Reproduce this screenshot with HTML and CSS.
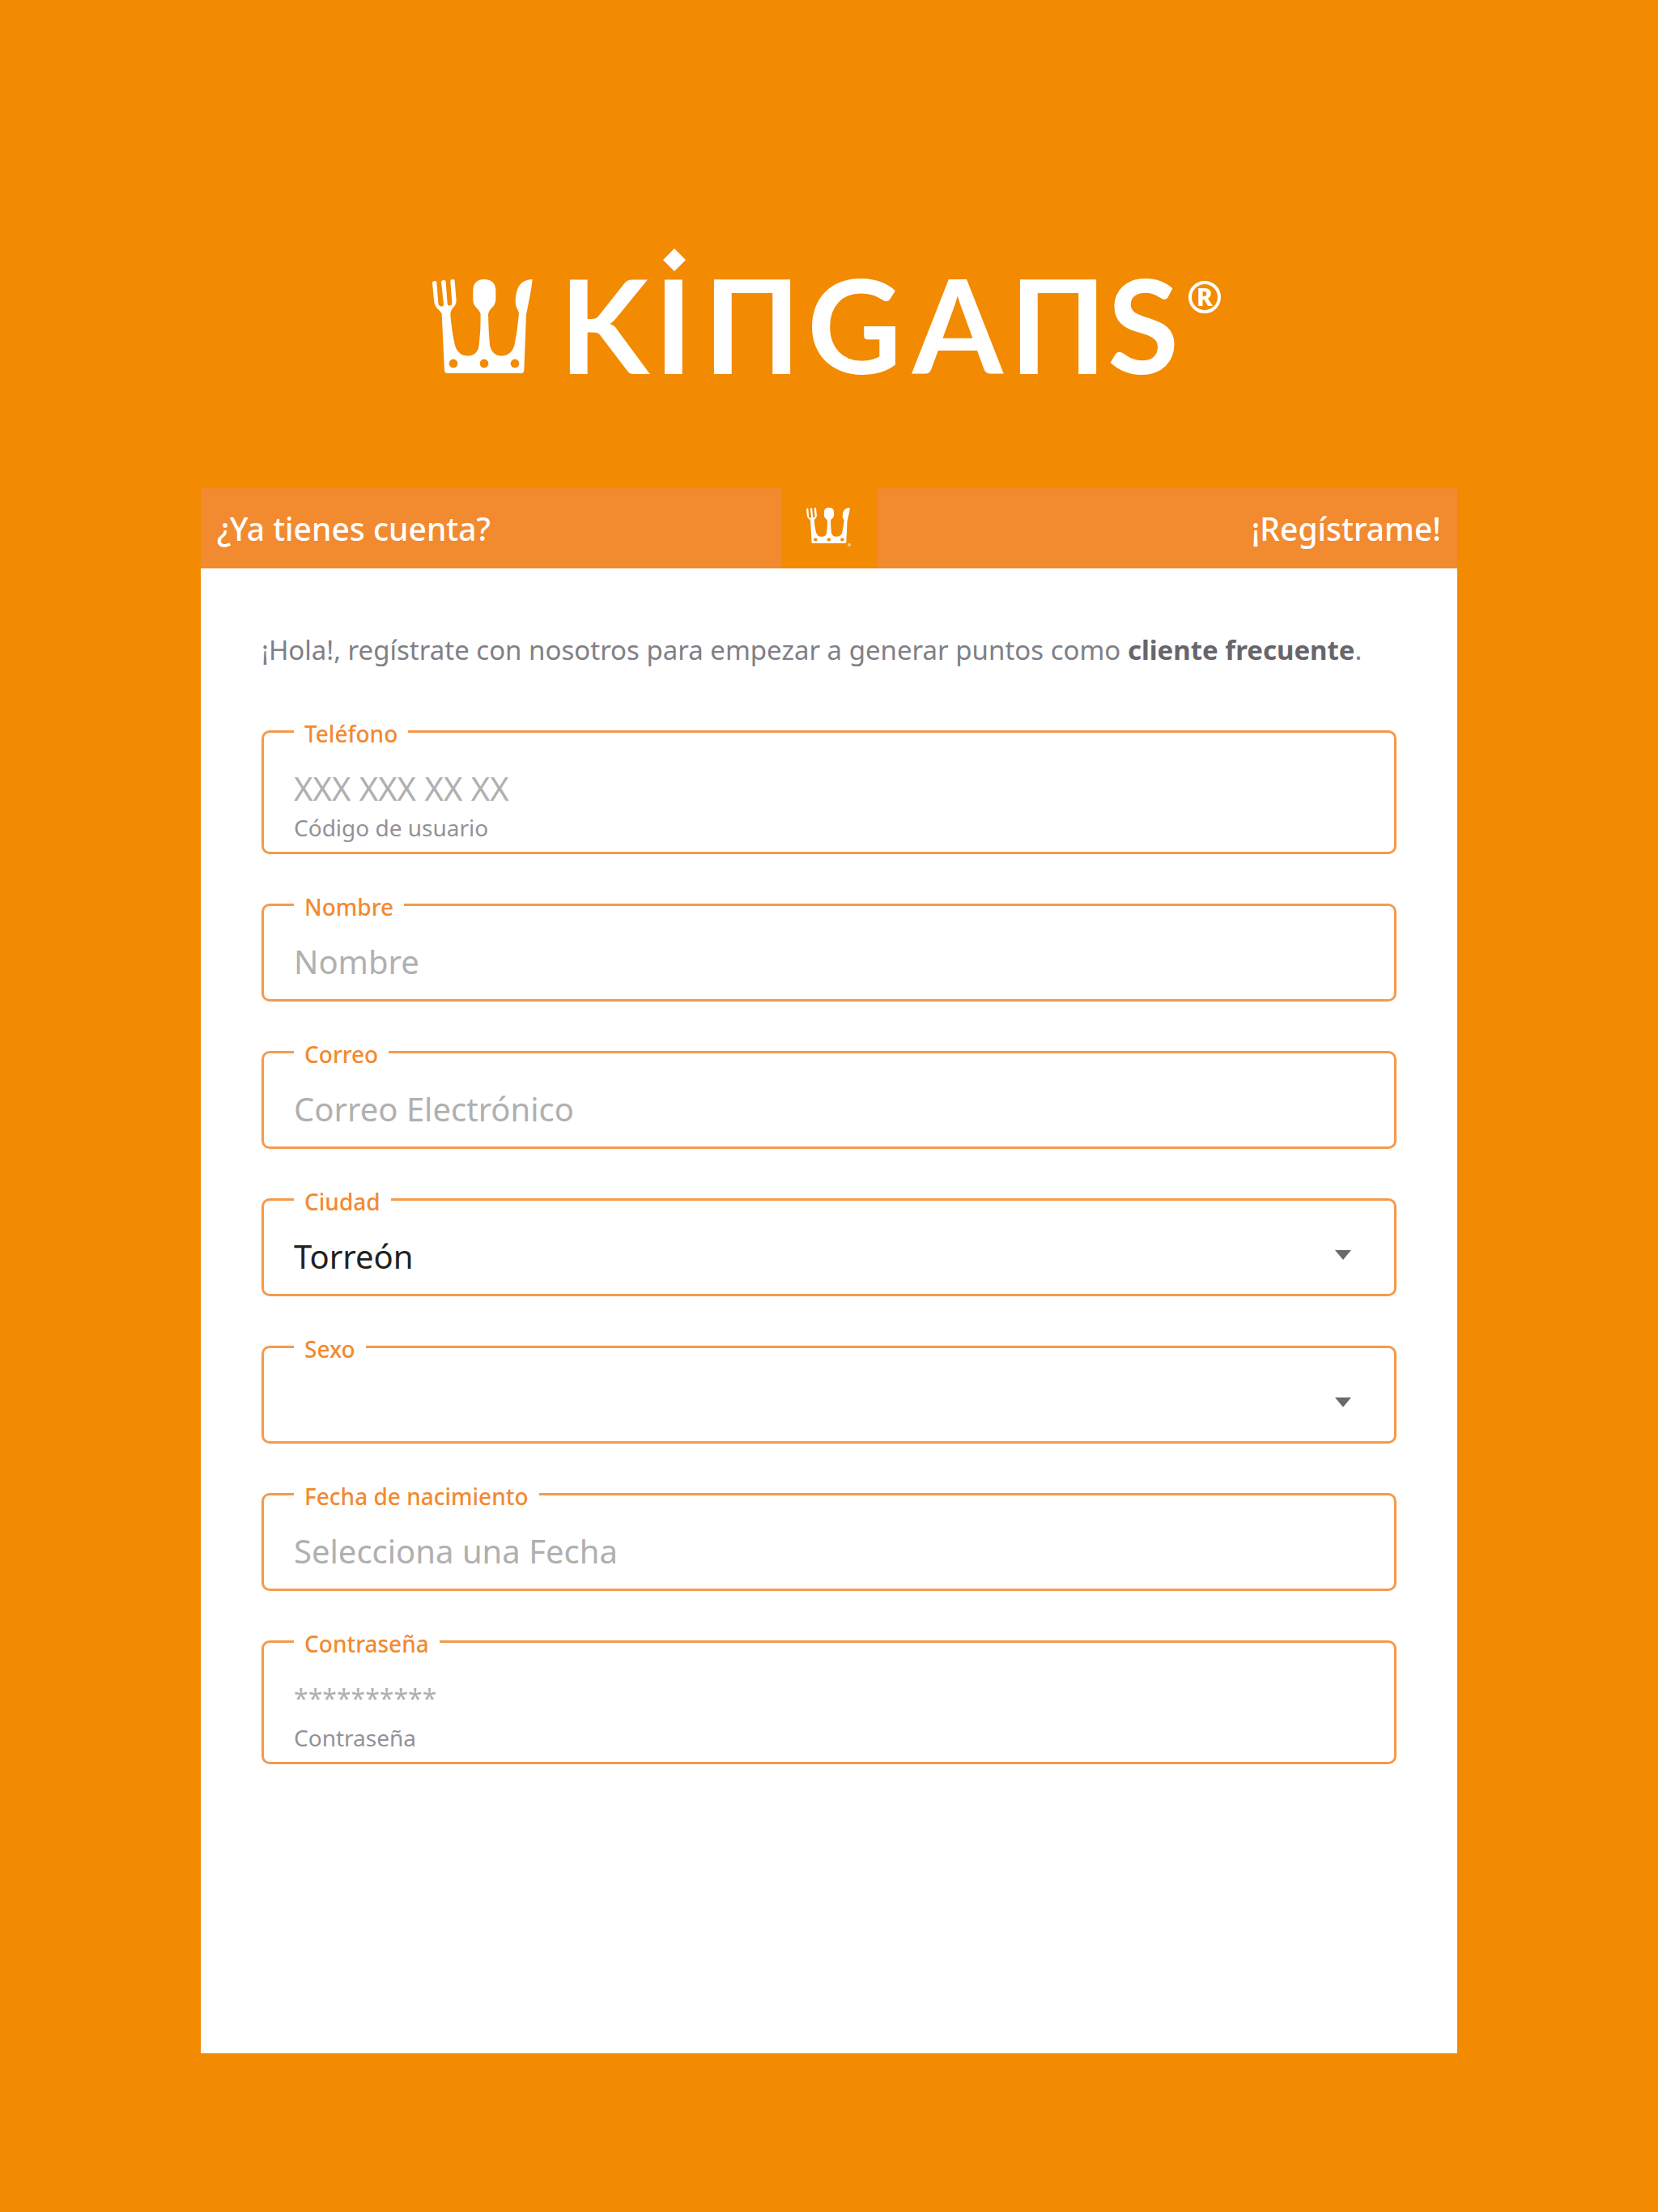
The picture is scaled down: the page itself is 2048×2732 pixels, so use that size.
FILE: index.html
```html
<!DOCTYPE html>
<html lang="es">
<head>
<meta charset="utf-8">
<meta name="viewport" content="width=device-width, initial-scale=1">
<title>Kingans</title>
<link rel="stylesheet" href="styles.css">
</head>
<body>
<svg class="defs" aria-hidden="true">
  <symbol id="crown" viewBox="42 165 372 346" preserveAspectRatio="none">
    <path fill-rule="evenodd" d="M42 178Q42 172 48 172L53 171Q58 171 58 176L64 254Q66 265 76 265Q85 265 84 256L75 175Q75 169 81 169L86 168Q92 168 92 174L98 256Q100 263 107 262Q116 260 115 250L109 172Q109 166 115 166L119 165Q125 165 125 171L131 244Q131 254 124 264Q110 278 109 291Q111 330 120 380L126 408Q138 447 174 447Q210 445 215 408Q222 350 221 292Q218 282 206 270Q193 258 193 240V206Q195 165 234 165Q275 165 277 206V240Q276 258 262 270Q250 282 249 296Q250 350 255 408Q264 446 298 447Q338 444 347 404Q358 350 363 290Q361 281 355 270Q350 262 350 245Q352 165 413 165Q410 195 404 225L390 295L382 500Q382 511 371 511H98Q87 511 87 500L77 292Q74 284 64 276Q49 262 48 240ZM104 475a16 16 0 1 0 32 0a16 16 0 1 0-32 0ZM218 475a16 16 0 1 0 32 0a16 16 0 1 0-32 0ZM332 475a16 16 0 1 0 32 0a16 16 0 1 0-32 0Z"/>
  </symbol>
</svg>
<main class="page">
  <svg class="logo" viewBox="524 280 1000 240" role="img" aria-label="Kingans">
    <use href="#crown" x="534" y="345" width="124" height="116"/>
    <path d="M833 307l14 14-14 14-14-14z"/>
    <text class="wordmark" y="462" x="691 808 869 997 1127 1247 1368">KIПGAПS</text>
    <circle class="ring" cx="1488" cy="367" r="18"/>
    <text class="mark" x="1488" y="378">R</text>
  </svg>
  <section class="card">
    <header class="tabs">
      <button class="tab" type="button">¿Ya tienes cuenta?</button>
      <svg class="badge" viewBox="0 0 118 99" aria-hidden="true">
        <use href="#crown" x="31" y="24" width="54" height="44"/>
        <circle class="dot" cx="84" cy="70" r="2"/>
      </svg>
      <button class="tab tab-end" type="button">¡Regístrame!</button>
    </header>
    <form class="form">
      <p class="intro">¡Hola!, regístrate con nosotros para empezar a generar puntos como <strong>cliente frecuente</strong>.</p>
      <fieldset class="field">
        <legend><label for="telefono">Teléfono</label></legend>
        <input id="telefono" type="tel" placeholder="XXX XXX XX XX" aria-describedby="telefono-ayuda">
        <p class="help" id="telefono-ayuda">Código de usuario</p>
      </fieldset>
      <fieldset class="field">
        <legend><label for="nombre">Nombre</label></legend>
        <input id="nombre" type="text" placeholder="Nombre">
      </fieldset>
      <fieldset class="field">
        <legend><label for="correo">Correo</label></legend>
        <input id="correo" type="email" placeholder="Correo Electrónico">
      </fieldset>
      <fieldset class="field">
        <legend><label for="ciudad">Ciudad</label></legend>
        <div class="select">
          <select id="ciudad"><option selected>Torreón</option></select>
          <svg class="caret" viewBox="0 0 20 12" aria-hidden="true"><path d="M0 0h20l-10 12z"/></svg>
        </div>
      </fieldset>
      <fieldset class="field">
        <legend><label for="sexo">Sexo</label></legend>
        <div class="select">
          <select id="sexo"><option selected value=""></option><option>Femenino</option><option>Masculino</option></select>
          <svg class="caret" viewBox="0 0 20 12" aria-hidden="true"><path d="M0 0h20l-10 12z"/></svg>
        </div>
      </fieldset>
      <fieldset class="field">
        <legend><label for="fecha">Fecha de nacimiento</label></legend>
        <input id="fecha" type="text" placeholder="Selecciona una Fecha">
      </fieldset>
      <fieldset class="field">
        <legend><label for="clave">Contraseña</label></legend>
        <input id="clave" class="secret" type="password" placeholder="**********" aria-describedby="clave-ayuda">
        <p class="help" id="clave-ayuda">Contraseña</p>
      </fieldset>
    </form>
  </section>
</main>
</body>
</html>
```
FILE: styles.css
```css
* { box-sizing: border-box; }
body {
  margin: 0;
  background: #f28a02;
  font-family: "Noto Sans", "Open Sans", sans-serif;
}
.defs { position: absolute; width: 0; height: 0; }
.page {
  min-height: 100vh;
  padding: 280px 24px 196px;
  display: flex;
  flex-direction: column;
  align-items: center;
  gap: 83px;
}
.logo { width: 100%; max-width: 1000px; fill: #fff; }
.wordmark { font: 700 161px Lato, "Noto Sans", sans-serif; }
.ring { fill: none; stroke: #fff; stroke-width: 4; }
.mark { font: 800 30px "Noto Sans", sans-serif; text-anchor: middle; }
.card {
  width: 100%;
  max-width: 1552px;
  flex: 1;
  background: #fff;
}
.tabs {
  display: grid;
  grid-template-columns: 1fr 118px 1fr;
  background: #f28a30;
}
.tab {
  border: 0;
  background: none;
  padding: 0 20px;
  color: #fff;
  font: 500 39px/99px "Noto Sans", "Open Sans", sans-serif;
  text-align: left;
}
.tab-end { text-align: right; }
.badge { display: block; width: 100%; background: #f28a02; fill: #fff; }
.dot { fill: #f9c98a; }
.form {
  padding: 79px 75px;
  display: flex;
  flex-direction: column;
  gap: 45px;
}
.intro {
  margin: 0 0 16px;
  color: #808086;
  font-size: 33px;
  line-height: 44px;
}
.intro strong { color: #66666c; }
.field {
  min-width: 0;
  margin: 0;
  padding: 0 37px;
  border: 3px solid #f49a4c;
  border-radius: 10px;
}
.field legend {
  padding: 6px 13px 0;
  color: #f28a30;
  font-size: 28px;
  font-weight: 500;
  line-height: 28px;
}
.field input, .field select {
  display: block;
  width: 100%;
  height: 100px;
  padding: 6px 0 0;
  border: 0;
  outline: 0;
  background: none;
  color: #222;
  font: 40px "Noto Sans", "Open Sans", sans-serif;
}
.field .secret { font-size: 32px; }
.field input::placeholder { color: #b0b0b0; opacity: 1; }
.field select { appearance: none; }
.select { position: relative; }
.caret {
  position: absolute;
  right: 16px;
  top: 46px;
  width: 20px;
  fill: #6a6a6a;
  pointer-events: none;
}
.help {
  margin: -18px 0 0;
  padding-bottom: 10px;
  color: #929298;
  font-size: 28px;
  line-height: 40px;
}
```
